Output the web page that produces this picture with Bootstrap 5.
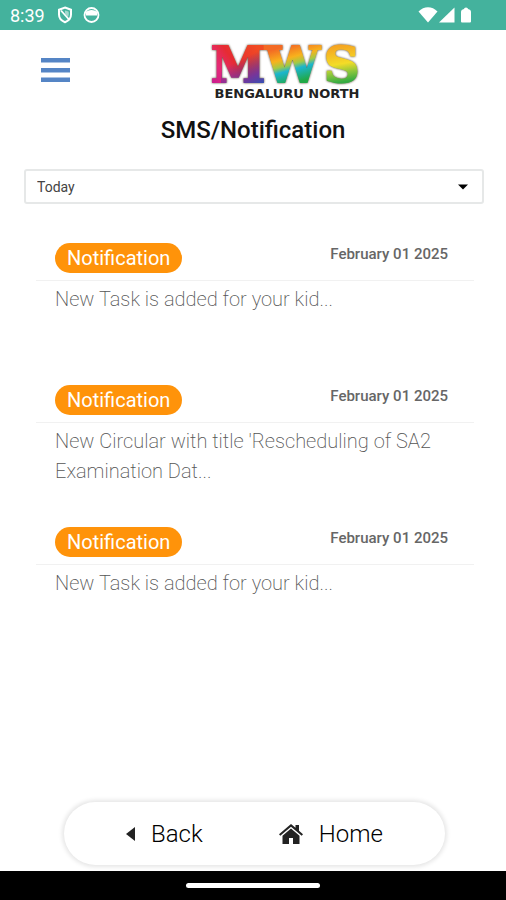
<!DOCTYPE html>
<html lang="en">
<head>
<meta charset="utf-8">
<meta name="viewport" content="width=device-width, initial-scale=1">
<title>SMS/Notification</title>
<link href="https://cdn.jsdelivr.net/npm/bootstrap@5.3.0/dist/css/bootstrap.min.css" rel="stylesheet">
<style>
body { font-family: Roboto, "Liberation Sans", sans-serif; color: #111; background: #fff; }
.status-bar { background: #44b29d; height: 30px; padding: 0 32px 0 10px; font-size: 18px; }
.top-bar { display: grid; grid-template-columns: 72px 1fr 72px; padding: 4px 0 0 0; }
.menu-btn { margin: 23px 0 0 40px; width: 30px; height: 27px; }
.brand-logo { margin-left: 68px; }
.logo-name { font: bold 49px "DejaVu Serif", serif; stroke-width: 2px; filter: drop-shadow(0 0 1px #54452f); }
.logo-place { font: bold 13px "DejaVu Sans", sans-serif; }
.page-title { font-size: 24px; line-height: 30px; font-weight: 500; margin: 13px 0 0; }
.filter { margin: 24px 22px 0 24px; }
.filter-select { height: 35px; border: 2px solid #e6e8e8; border-radius: 3px; font-size: 14px; line-height: 24px; color: #444; padding: 0 40px 0 11px;
  background-image: url("data:image/svg+xml,%3Csvg xmlns='http://www.w3.org/2000/svg' viewBox='0 0 10 6'%3E%3Cpath d='M0 .5h10L5 5.5z'/%3E%3C/svg%3E");
  background-size: 10px 6px; background-position: right 14px center; }
.notices { margin: 31px 32px 0 36px; }
.notice { min-height: 142px; }
.notice-head { height: 46px; border-bottom: 1px solid #f1f1f1; padding: 8px 26px 0 19px; }
.notice-tag { background: #ff930a; color: #fff; font-size: 20px; font-weight: 400; line-height: 30px; height: 30px; padding: 0 12px; }
.notice-date { font-size: 15px; line-height: 22px; font-weight: 500; color: #666; }
.notice-text { font-size: 20px; line-height: 30px; font-weight: 200; color: #555; padding: 3px 26px 0 19px; }
.action-bar { margin: 0 61px 6px 64px; height: 63px; box-shadow: 0 0 4px 2px #e6e6e6; padding: 0 62px; }
.action-link { font-size: 24px; font-weight: 300; color: #000; }
.gesture-bar { background: #000; height: 29px; }
.gesture-handle { width: 134px; height: 5px; background: #fff; }
</style>
<script src="https://cdn.jsdelivr.net/npm/bootstrap@5.3.0/dist/js/bootstrap.bundle.min.js"></script>
</head>
<body class="d-flex flex-column min-vh-100">
<div class="status-bar d-flex align-items-center justify-content-between text-white">
  <div class="d-flex align-items-center">
    <span>8:39</span>
    <svg class="ms-2" width="48" height="18" viewBox="0 0 48 18" fill="none" stroke="#fff" aria-hidden="true">
      <path d="M12 1.500 18 3.800v4.700c0 3.500-2.200 6.200-6 7.700-3.800-1.500-6-4.200-6-7.700V3.800z" stroke-width="2"/>
      <path d="m8 4.500 8 9" stroke-width="1.800"/>
      <path d="M12 4.500v3l3 3.500c1-2 1-4 .5-5.500z" fill="#fff" stroke="none" opacity=".5"/>
      <circle cx="38.500" cy="9" r="7" stroke-width="1.800"/>
      <path d="M32.500 6q6-4 12 0l-.5 3.500h-11z" fill="#fff" stroke="none"/>
    </svg>
  </div>
  <svg width="56" height="18" viewBox="0 0 56 18" fill="#fff" aria-hidden="true">
    <path d="M.5 5.500C6-.2 14-.2 19.500 5.500L10 16.500z"/>
    <path d="M21 16.500h15.500V1.500z"/>
    <path d="M46 3q0-1.500 2-1.500T50 3q3 .5 3 3v9.500q0 1-1 1h-8q-1 0-1-1V6q0-2.500 3-3z"/>
  </svg>
</div>

<header class="top-bar">
  <button class="menu-btn btn p-0 border-0 d-flex" type="button" aria-label="Menu">
    <svg width="30" height="27" viewBox="0 0 30 27" fill="#5585c5" aria-hidden="true"><path d="M1 1h29v4.500H1zM1 11h29v4.500H1zM1 20.500h29V25H1z"/></svg>
  </button>
  <div class="d-flex justify-content-center">
    <svg class="brand-logo" width="156" height="68" viewBox="0 0 156 68" role="img" aria-label="MWS Bengaluru North">
      <defs>
        <linearGradient id="baseM" x1="0" y1="1" x2="1" y2=".5">
          <stop offset="0" stop-color="#c01798"/><stop offset=".3" stop-color="#e52a78"/><stop offset=".55" stop-color="#e62c32"/><stop offset="1" stop-color="#f14b22"/>
        </linearGradient>
        <linearGradient id="shadeM" x1=".5" y1=".35" x2=".85" y2="1">
          <stop offset="0" stop-color="#4b32a0" stop-opacity="0"/><stop offset=".6" stop-color="#6a35a6" stop-opacity=".9"/><stop offset="1" stop-color="#2856b8"/>
        </linearGradient>
        <pattern id="hueM" patternUnits="userSpaceOnUse" x="0" y="8" width="60" height="44">
          <rect width="60" height="44" fill="url(#baseM)"/><rect x="12" width="48" height="44" fill="url(#shadeM)"/>
        </pattern>
        <linearGradient id="hueW" gradientUnits="userSpaceOnUse" x1="78" y1="12" x2="88" y2="48">
          <stop offset="0" stop-color="#f36a24"/><stop offset=".32" stop-color="#f8b21c"/><stop offset=".5" stop-color="#a4c944"/><stop offset=".65" stop-color="#1bb5cf"/><stop offset="1" stop-color="#20a947"/>
        </linearGradient>
        <linearGradient id="hueS" gradientUnits="userSpaceOnUse" x1="128" y1="12" x2="134" y2="48">
          <stop offset="0" stop-color="#f5a421"/><stop offset=".5" stop-color="#f4dc27"/><stop offset=".75" stop-color="#8cc63c"/><stop offset="1" stop-color="#35ab42"/>
        </linearGradient>
      </defs>
      <g class="logo-name">
        <text x="2" y="48" fill="url(#hueM)" stroke="url(#hueM)">M</text>
        <text x="56" y="48" fill="url(#hueW)" stroke="url(#hueW)">W</text>
        <text x="115" y="48" fill="url(#hueS)" stroke="url(#hueS)">S</text>
      </g>
      <text class="logo-place" x="78" y="64" text-anchor="middle" fill="#222">BENGALURU NORTH</text>
    </svg>
  </div>
</header>

<main class="flex-grow-1">
  <h1 class="page-title text-center">SMS/Notification</h1>
  <div class="filter">
    <label class="visually-hidden" for="period">Period</label>
    <select class="form-select filter-select" id="period"><option>Today</option></select>
  </div>
  <section class="notices">
    <article class="notice">
      <div class="notice-head d-flex justify-content-between align-items-start">
        <span class="notice-tag rounded-pill">Notification</span><time class="notice-date" datetime="2025-02-01">February 01 2025</time>
      </div>
      <p class="notice-text mb-0">New Task is added for your kid...</p>
    </article>
    <article class="notice">
      <div class="notice-head d-flex justify-content-between align-items-start">
        <span class="notice-tag rounded-pill">Notification</span><time class="notice-date" datetime="2025-02-01">February 01 2025</time>
      </div>
      <p class="notice-text mb-0">New Circular with title 'Rescheduling of SA2 Examination Dat...</p>
    </article>
    <article class="notice">
      <div class="notice-head d-flex justify-content-between align-items-start">
        <span class="notice-tag rounded-pill">Notification</span><time class="notice-date" datetime="2025-02-01">February 01 2025</time>
      </div>
      <p class="notice-text mb-0">New Task is added for your kid...</p>
    </article>
  </section>
</main>

<nav class="action-bar bg-white rounded-pill d-flex align-items-center justify-content-between" aria-label="Page actions">
  <a class="action-link text-decoration-none d-flex align-items-center gap-3" href="#">
    <svg width="9" height="16" viewBox="0 0 9 16" fill="#222" aria-hidden="true"><path d="M9 1v14L0 8z"/></svg>Back
  </a>
  <a class="action-link text-decoration-none d-flex align-items-center gap-3" href="#">
    <svg width="24" height="20" viewBox="0 0 24 20" fill="#222" aria-hidden="true"><path d="M12 0 16.500 3.800V1h3.500v5.800L24 10.200l-1.300 1.500L12 2.700 1.300 11.700 0 10.200z"/><path d="m12 4.500 8.500 7.200V20H14v-6h-4v6H3.500v-8.300z"/></svg>Home
  </a>
</nav>
<footer class="gesture-bar d-flex align-items-center justify-content-center"><div class="gesture-handle rounded-pill"></div></footer>
</body>
</html>
